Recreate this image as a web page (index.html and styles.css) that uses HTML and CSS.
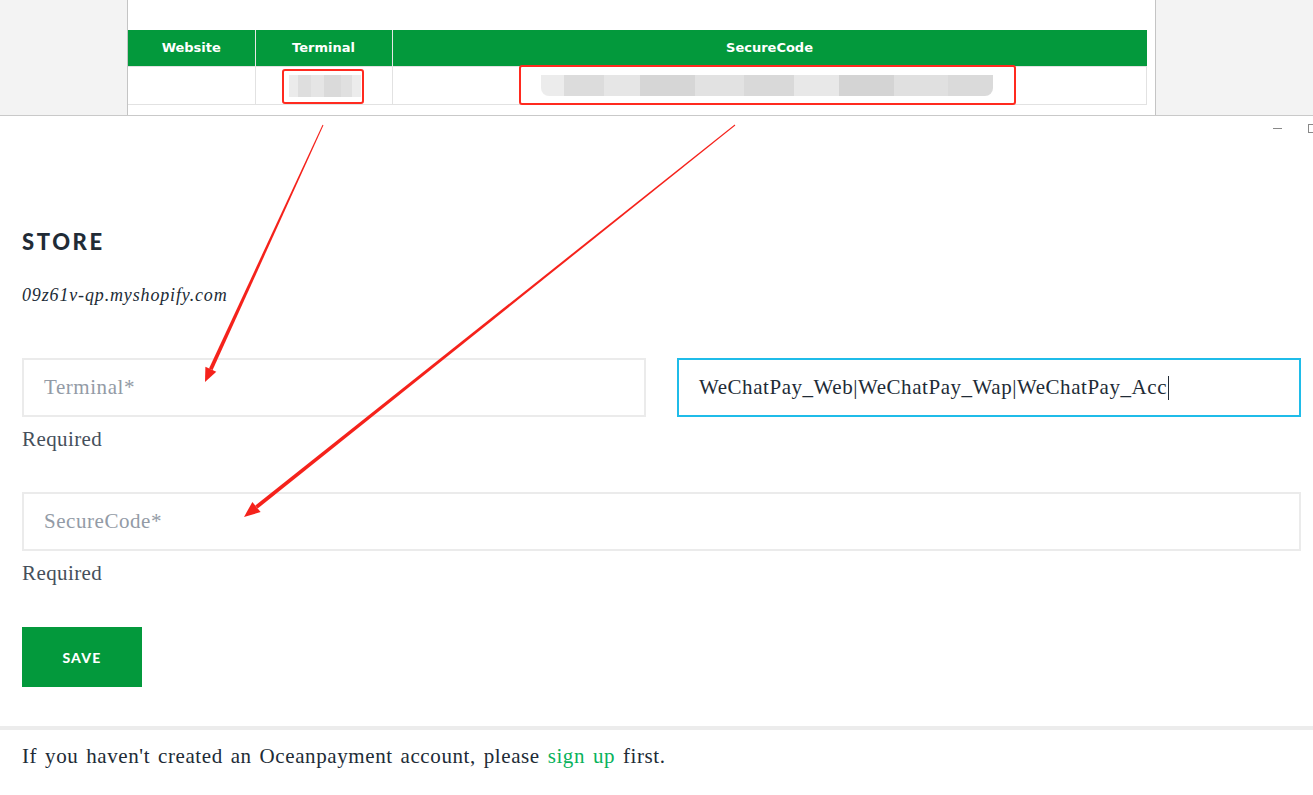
FILE: index.html
```html
<!DOCTYPE html>
<html>
<head>
<meta charset="utf-8">
<link rel="stylesheet" href="styles.css">
</head>
<body>
<div class="top">
  <div class="side side-left"></div>
  <div class="panel">
    <table class="keys">
      <thead>
        <tr><th class="c-web">Website</th><th class="c-term">Terminal</th><th class="c-code">SecureCode</th></tr>
      </thead>
      <tbody>
        <tr>
          <td></td>
          <td class="cell"><span class="blur blur-term"></span><span class="mark mark-term"></span></td>
          <td class="cell"><span class="blur blur-code"></span><span class="mark mark-code"></span></td>
        </tr>
      </tbody>
    </table>
  </div>
  <div class="side side-right"></div>
</div>

<div class="main">
  <div class="winctl"><span class="min"></span><span class="max"></span></div>
  <h2 class="store-title">STORE</h2>
  <p class="domain">09z61v-qp.myshopify.com</p>

  <div class="row two">
    <div class="field">
      <div class="input"><span class="ph">Terminal*</span></div>
      <div class="help">Required</div>
    </div>
    <div class="field">
      <div class="input focus"><span class="val">WeChatPay_Web|WeChatPay_Wap|WeChatPay_Acc</span><span class="caret"></span></div>
    </div>
  </div>

  <div class="row">
    <div class="field">
      <div class="input"><span class="ph">SecureCode*</span></div>
      <div class="help">Required</div>
    </div>
  </div>

  <button class="save">SAVE</button>
</div>

<div class="divider"></div>
<p class="foot">If you haven't created an Oceanpayment account, please <a href="#">sign up</a> first.</p>

<svg class="arrows" width="1313" height="795" viewBox="0 0 1313 795">
  <polygon fill="#f5221b" points="323.45,125.2 212.6,370.1 209.0,368.5 322.55,124.8"/>
  <polygon fill="#f5221b" points="205,382 216.3,371.8 205.4,366.8"/>
  <polygon fill="#f5221b" points="735.3,125.4 257.7,508.6 255.3,505.4 734.7,124.6"/>
  <polygon fill="#f5221b" points="244,517 260.6,512.1 252.4,501.9"/>
</svg>
</body>
</html>
```

FILE: styles.css
```css
* { box-sizing: border-box; }
html, body { margin: 0; padding: 0; }
body {
  width: 1313px;
  height: 795px;
  overflow: hidden;
  position: relative;
  background: #fff;
  font-family: "Liberation Serif", "DejaVu Serif", serif;
  color: #212b36;
}

/* top screenshot strip */
.top {
  display: flex;
  height: 116px;
  border-bottom: 1px solid #c9c9c9;
}
.side { background: #f3f3f3; }
.side-left { width: 128px; border-right: 1px solid #c4c4c4; }
.side-right { flex: 1; border-left: 1px solid #c4c4c4; }
.panel {
  width: 1027px;
  background: #fff;
  padding-top: 30px;
}
.keys {
  width: 1019px;
  border-collapse: collapse;
  font-family: "DejaVu Sans", Verdana, sans-serif;
  font-size: 13px;
}
.keys th {
  background: #03993c;
  color: #fff;
  height: 36px;
  font-weight: bold;
  border-left: 1px solid #e6e6e6;
  padding: 0;
}
.keys th:first-child { border-left: none; }
.c-web { width: 127px; }
.c-term { width: 137px; }
.keys td {
  height: 38px;
  border: 1px solid #e2e2e2;
  padding: 0;
}
.keys td:first-child { border-left: none; }
.cell { position: relative; }
.blur {
  position: absolute;
  display: block;
}
.blur-term {
  left: 33px; top: 8px; width: 72px; height: 22px;
  background: linear-gradient(90deg, #ebebeb 0 12%, #dedede 12% 30%, #e5e5e5 30% 48%, #dadada 48% 72%, #e0e0e0 72% 88%, #ececec 88%);
}
.blur-code {
  left: 148px; top: 8px; width: 452px; height: 21px;
  background: linear-gradient(90deg, #ececec 0 5%, #dcdcdc 5% 14%, #e6e6e6 14% 22%, #d6d6d6 22% 34%, #e2e2e2 34% 45%, #d9d9d9 45% 56%, #e8e8e8 56% 66%, #d4d4d4 66% 78%, #e0e0e0 78% 90%, #dadada 90%);
  border-radius: 0 0 8px 8px;
}
.mark {
  position: absolute;
  display: block;
  border: 2px solid #ff2a1f;
  border-radius: 3px;
}
.mark-term { left: 26px; top: 2px; width: 82px; height: 35px; }
.mark-code { left: 126px; top: -2px; width: 497px; height: 40px; }

/* main form */
.main {
  position: relative;
  padding: 0 12px 0 22px;
}
.winctl { position: absolute; top: 8px; right: 0; display: flex; align-items: center; }
.winctl .min { width: 9px; height: 1px; background: #888; margin-right: 26px; }
.winctl .max { width: 5px; height: 9px; border: 1px solid #888; border-right: none; }

.store-title {
  margin: 0;
  padding-top: 111px;
  font-family: Lato, "Open Sans", sans-serif;
  font-weight: 900;
  font-size: 22px;
  line-height: 30px;
  letter-spacing: 2.6px;
  color: #212b36;
}
.domain {
  margin: 26px 0 0;
  font-style: italic;
  font-size: 18px;
  letter-spacing: 0.85px;
  line-height: 24px;
  color: #212b36;
}
.row { margin-top: 51px; }
.row + .row { margin-top: 41px; }
.two {
  display: grid;
  grid-template-columns: 624px 624px;
  column-gap: 31px;
}
.input {
  height: 59px;
  border: 2px solid #ebebeb;
  display: flex;
  align-items: center;
  padding: 0 20px;
  font-size: 21px;
  letter-spacing: 0.55px;
}
.input.focus { border-color: #1fbce9; }
.ph { color: #939ba6; }
.val { color: #212b36; }
.caret { width: 1px; height: 24px; background: #212b36; margin-left: 1px; }
.help {
  margin-top: 10px;
  font-size: 21px;
  letter-spacing: 0.4px;
  line-height: 24px;
  color: #454f5b;
}
.save {
  display: block;
  margin-top: 42px;
  width: 120px;
  height: 60px;
  border: none;
  background: #03993c;
  color: #fff;
  font-family: Lato, "Open Sans", sans-serif;
  font-weight: 900;
  font-size: 14px;
  letter-spacing: 1.2px;
  padding: 0;
}
.divider {
  margin-top: 39px;
  height: 4px;
  background: #ececec;
}
.foot {
  margin: 14px 0 0;
  padding-left: 22px;
  font-size: 21px;
  letter-spacing: 0.6px;
  word-spacing: 2px;
  line-height: 24px;
  color: #212b36;
}
.foot a { color: #08b25c; text-decoration: none; }

.arrows { position: absolute; left: 0; top: 0; pointer-events: none; }
```
